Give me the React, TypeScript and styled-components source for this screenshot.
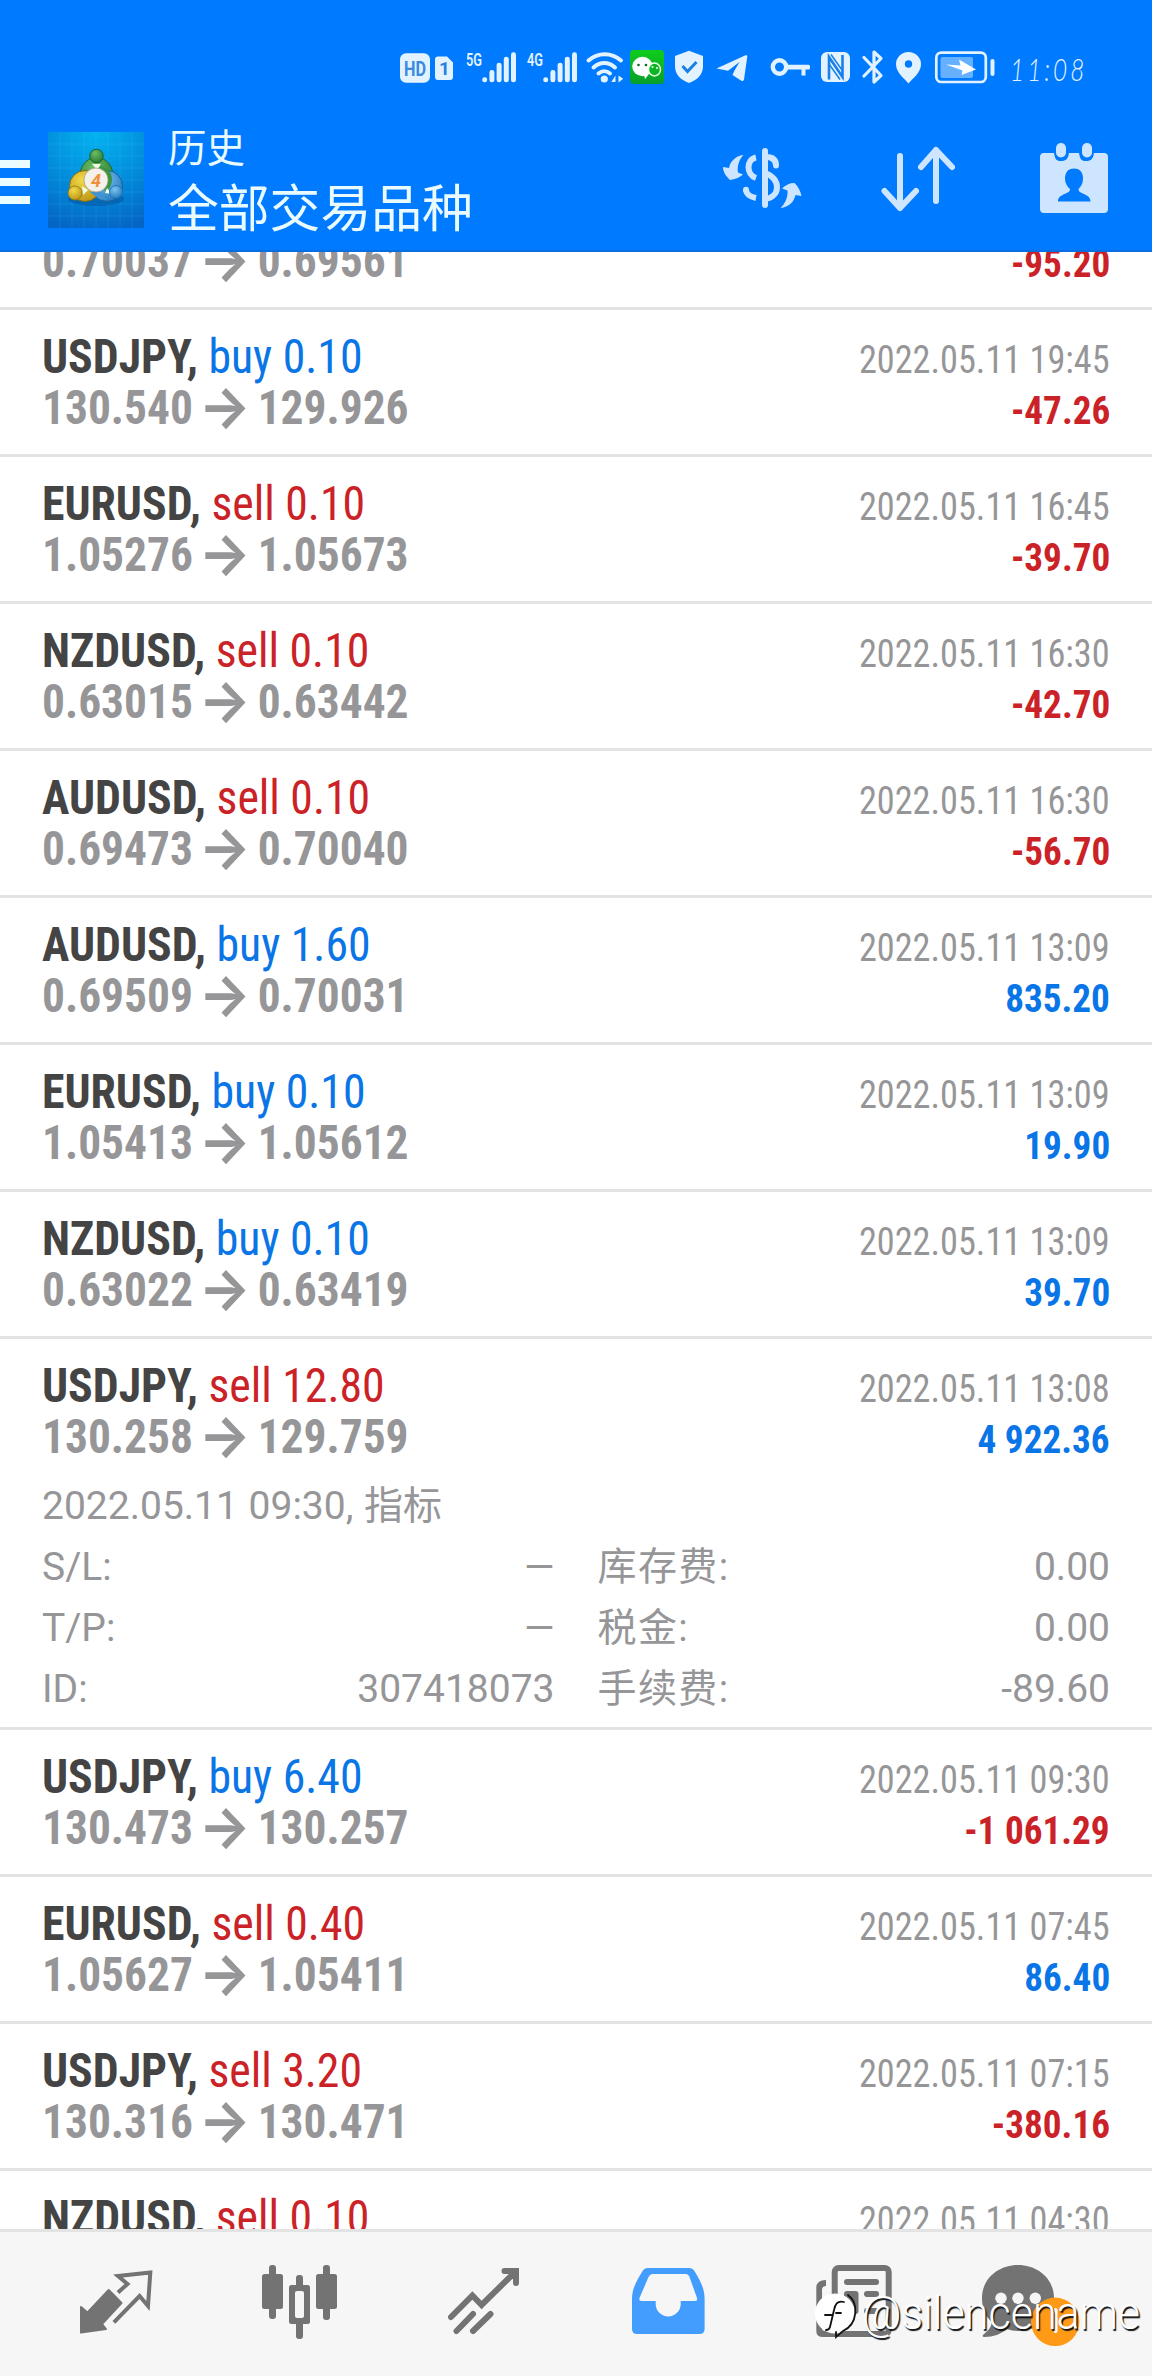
import React from "react";
import styled, { createGlobalStyle } from "styled-components";

const BLUE = "#0a75e6";
const RED = "#cb2227";
const GREY = "#969698";
const ICE = "#e2f3ff";
const NAV = "#737373";

const Global = createGlobalStyle`
  * { box-sizing: border-box; }
  body { margin: 0; background: #fff; }
`;

const Screen = styled.div`
  position: relative;
  display: flex;
  flex-direction: column;
  width: 1152px;
  height: 2376px;
  overflow: hidden;
  background: #fff;
  font-family: Roboto, "Noto Sans CJK SC", sans-serif;
`;

const Header = styled.header`
  flex: none;
  height: 252px;
  background: #007aff;
  border-bottom: 2px solid #0a6ee0;
  padding-top: 48px;
`;

const StatusBar = styled.div`
  display: flex;
  height: 40px;
  padding-left: 400px;
`;

const StatusIcon = styled.svg<{ $gap?: number }>`
  flex: none;
  display: block;
  height: 40px;
  margin-left: ${(p) => p.$gap ?? 0}px;
  overflow: visible;
  fill: ${ICE};
`;

const Clock = styled.span`
  margin-left: 15px;
  font: italic 300 32px/42px Lato, Roboto, sans-serif;
  letter-spacing: 4px;
  color: ${ICE};
  white-space: nowrap;
  transform: scaleX(0.76);
  transform-origin: left center;
`;

const TitleBar = styled.div`
  display: flex;
  align-items: flex-start;
  height: 162px;
  padding-top: 32px;
`;

const Burger = styled.div`
  display: flex;
  flex-direction: column;
  gap: 10px;
  width: 30px;
  margin-top: 40px;
  span { height: 8px; background: #ebfcff; }
`;

const Logo = styled.svg`
  display: block;
  flex: none;
  margin: 12px 0 0 18px;
`;

const Titles = styled.div`
  flex: 1;
  margin: 4px 0 0 24px;
  color: #e9fbff;
  white-space: nowrap;
`;
const Caption = styled.div`
  font-size: 38.5px;
  line-height: 50px;
`;
const Title = styled.div`
  font-size: 50.8px;
  line-height: 71px;
`;

const Actions = styled.div`
  display: flex;
  gap: 60px;
  padding-right: 44px;
  margin-top: 22px;
  svg { display: block; }
`;

const List = styled.main`
  flex: 1;
  min-height: 0;
  overflow: hidden;
`;
const Row = styled.section<{ $part?: "tail" | "head" }>`
  padding: 21px 42px;
  border-bottom: 3px solid #e3e3e3;
  ${(p) => p.$part === "tail" && "padding-top: 0; margin-top: -17px;"}
  ${(p) => p.$part === "head" && "padding-bottom: 0; border-bottom: 0;"}
`;
const Line = styled.div`
  display: flex;
  justify-content: space-between;
  align-items: baseline;
  height: 51px;
  line-height: 51px;
  white-space: nowrap;
`;
const Condensed = styled.span<{ $from?: "left" | "right" }>`
  display: inline-block;
  font-family: "Roboto Condensed", Roboto, sans-serif;
  font-stretch: 75%;
  transform: scaleX(0.953);
  transform-origin: ${(p) => p.$from ?? "left"} center;
`;
const Deal = styled(Condensed)<{ $tone: string }>`
  font-size: 48px;
  color: ${(p) => p.$tone};
  b { color: #444; }
`;
const Prices = styled(Condensed)`
  font-size: 48px;
  font-weight: 700;
  color: ${GREY};
  transform: scaleX(0.946);
`;
const Arrow = styled.span`
  display: inline-block;
  height: 0;
  margin: 0 -4px 0 -5px;
  font: 700 58px/0 Inter, sans-serif;
  vertical-align: -3px;
`;
const Time = styled(Condensed)`
  font-size: 39px;
  color: ${GREY};
  transform: scaleX(0.93);
`;
const Profit = styled(Condensed)<{ $tone: string }>`
  font-size: 39px;
  font-weight: 700;
  color: ${(p) => p.$tone};
`;

const Details = styled.div`
  padding-top: 14px;
  margin-bottom: -14px;
  font-size: 39px;
  line-height: 61px;
  color: ${GREY};
`;
const Opened = styled.div`
  height: 61px;
  word-spacing: 1px;
  white-space: nowrap;
`;
const Fields = styled.dl`
  display: grid;
  grid-template-columns: 1fr 1fr;
  grid-auto-rows: 61px;
  column-gap: 43px;
  margin: 0;
`;
const Field = styled.div<{ $wide: boolean }>`
  display: flex;
  justify-content: space-between;
  dt, dd { margin: 0; white-space: nowrap; }
  dt { letter-spacing: ${(p) => (p.$wide ? 1.4 : 0)}px; }
`;

const Nav = styled.nav`
  flex: none;
  display: flex;
  align-items: center;
  height: 147px;
  padding: 0 24px;
  background: #f6f6f6;
  border-top: 3px solid #e3e3e3;
`;
const Tab = styled.div`
  flex: 1;
  display: flex;
  justify-content: center;
  svg { display: block; overflow: visible; }
`;

const Watermark = styled.div`
  position: absolute;
  left: 815px;
  top: 2284px;
  display: flex;
  align-items: center;
  height: 58px;
  color: #fff;
  font: 300 46px/58px Roboto, sans-serif;
  text-shadow: 1.5px 1.5px 1px #111;
  white-space: nowrap;
  span { transform: scaleX(0.936); transform-origin: left center; }
`;

type Trade = {
  sym?: string;
  side?: "buy" | "sell";
  lot?: string;
  time?: string;
  from?: string;
  to?: string;
  profit?: string;
  details?: boolean;
};

const t = (
  sym: string, side: "buy" | "sell", lot: string, from: string, to: string,
  time: string, profit: string, details = false
): Trade => ({ sym, side, lot, from, to, time: "2022.05.11 " + time, profit, details });

const trades: Trade[] = [
  { from: "0.70037", to: "0.69561", profit: "-95.20" },
  t("USDJPY", "buy", "0.10", "130.540", "129.926", "19:45", "-47.26"),
  t("EURUSD", "sell", "0.10", "1.05276", "1.05673", "16:45", "-39.70"),
  t("NZDUSD", "sell", "0.10", "0.63015", "0.63442", "16:30", "-42.70"),
  t("AUDUSD", "sell", "0.10", "0.69473", "0.70040", "16:30", "-56.70"),
  t("AUDUSD", "buy", "1.60", "0.69509", "0.70031", "13:09", "835.20"),
  t("EURUSD", "buy", "0.10", "1.05413", "1.05612", "13:09", "19.90"),
  t("NZDUSD", "buy", "0.10", "0.63022", "0.63419", "13:09", "39.70"),
  t("USDJPY", "sell", "12.80", "130.258", "129.759", "13:08", "4 922.36", true),
  t("USDJPY", "buy", "6.40", "130.473", "130.257", "09:30", "-1 061.29"),
  t("EURUSD", "sell", "0.40", "1.05627", "1.05411", "07:45", "86.40"),
  t("USDJPY", "sell", "3.20", "130.316", "130.471", "07:15", "-380.16"),
  { sym: "NZDUSD", side: "sell", lot: "0.10", time: "2022.05.11 04:30" },
];

const fields = [
  ["S/L:", "—"], ["库存费:", "0.00"],
  ["T/P:", "—"], ["税金:", "0.00"],
  ["ID:", "307418073"], ["手续费:", "-89.60"],
];

function TradeRow({ d }: { d: Trade }) {
  return (
    <Row $part={!d.sym ? "tail" : !d.from ? "head" : undefined}>
      {d.sym && (
        <Line>
          <Deal $tone={d.side === "buy" ? BLUE : RED}><b>{d.sym},</b> {d.side} {d.lot}</Deal>
          <Time $from="right">{d.time}</Time>
        </Line>
      )}
      {d.from && (
        <Line>
          <Prices>{d.from} <Arrow>→</Arrow> {d.to}</Prices>
          <Profit $from="right" $tone={d.profit?.startsWith("-") ? RED : BLUE}>{d.profit}</Profit>
        </Line>
      )}
      {d.details && (
        <Details>
          <Opened>2022.05.11 09:30, 指标</Opened>
          <Fields>
            {fields.map(([k, v], i) => (
              <Field key={k} $wide={i % 2 === 1}><dt>{k}</dt><dd>{v}</dd></Field>
            ))}
          </Fields>
        </Details>
      )}
    </Row>
  );
}

function Signal({ label, gap }: { label: string; gap: number }) {
  const tops = [29.3, 22, 14.7, 8.7, 4.3];
  return (
    <StatusIcon $gap={gap} width="50">
      <text x="0" y="17.5" fontSize="18.5" fontWeight="600" fontFamily="Roboto" textLength="16" lengthAdjust="spacingAndGlyphs">{label}</text>
      {tops.map((y, i) => (
        <rect key={y} x={16.2 + i * 7.2} y={y} width="5" height={34.3 - y} rx="2.4" />
      ))}
    </StatusIcon>
  );
}

function StatusIcons() {
  return (
    <StatusBar>
      <StatusIcon width="30">
        <rect y="5.3" width="30" height="29.4" rx="6" />
        <text x="4" y="27.5" fontSize="20" fontWeight="700" fontFamily="Roboto" fill="#3a8ae0" textLength="22" lengthAdjust="spacingAndGlyphs">HD</text>
      </StatusIcon>
      <StatusIcon $gap={5} width="18">
        <path d="M3 8.500h9l6 6V29a3 3 0 0 1-3 3H3a3 3 0 0 1-3-3V11.500a3 3 0 0 1 3-3z" />
        <text x="4" y="27" fontSize="19" fontWeight="700" fontFamily="Roboto" fill="#2a80e0">1</text>
      </StatusIcon>
      <Signal label="5G" gap={13} />
      <Signal label="4G" gap={11} />
      <StatusIcon $gap={9} width="38">
        <g fill="none" stroke={ICE} strokeWidth="4" strokeLinecap="round">
          <path d="M2.500 12.500C12 4 25.500 4 35 12.500" />
          <path d="M7.500 19.500c6.500-6 15-6 21.500 0" />
          <path d="M12.500 25.500c3.500-3 8-3 11.500 0" />
        </g>
        <circle cx="18.300" cy="31" r="3.600" />
        <path d="M29.500 27.500v6.500h-4.200zM32.500 34.500v-7l4.700 3.200z" />
      </StatusIcon>
      <StatusIcon $gap={6} width="34">
        <defs>
          <linearGradient id="wx" x1="0" y1="0" x2="0" y2="1">
            <stop offset="0" stopColor="#10cd1c" /><stop offset="1" stopColor="#079e2b" />
          </linearGradient>
        </defs>
        <rect y="2" width="34" height="34" rx="4" fill="url(#wx)" />
        <ellipse cx="12.500" cy="18.500" rx="10.300" ry="9.700" fill="#fff" />
        <path d="M14 27l1 4 4-5z" fill="#fff" />
        <ellipse cx="24.500" cy="21.500" rx="6" ry="6.500" fill="#0bb624" stroke="#e8ffe8" strokeWidth="1.500" />
        <circle cx="8.500" cy="17" r="1.300" fill="#0b6a20" /><circle cx="16" cy="17" r="1.300" fill="#0b6a20" />
        <circle cx="22.500" cy="19" r="1" fill="#fff" /><circle cx="27" cy="20" r="1" fill="#fff" />
      </StatusIcon>
      <StatusIcon $gap={11} width="28">
        <path d="M14 2.700L28 8v10c0 9-6 14-14 17C6 32 0 27 0 18V8z" />
        <path d="M7.500 18l5 5.500L21.500 14" fill="none" stroke="#1a7fe8" strokeWidth="3" />
      </StatusIcon>
      <StatusIcon $gap={12.500} width="32">
        <path d="M0.500 20.500L29.500 7.300c1-.5 2 .2 1.800 1.300L28 31.500c-.2 1.300-1.500 1.900-2.600 1.200L16.500 27l2-4.500L23.500 14 12 22.800z" />
      </StatusIcon>
      <StatusIcon $gap={23} width="39">
        <circle cx="8.500" cy="19" r="6.700" fill="none" stroke={ICE} strokeWidth="4.400" />
        <path d="M16 16.800h21.500q1.500 0 1.500 1.500v1.700q0 1.500-1.500 1.500H34.500v6h-4v-6H16z" />
      </StatusIcon>
      <StatusIcon $gap={11} width="29">
        <rect y="4" width="29" height="30" rx="6" />
        <path d="M8 31.500V9l13.500 20V7" fill="none" stroke="#1a7fe8" strokeWidth="2.600" />
        <path d="M10 6.500l11 15.500M8 16l11 15.500" fill="none" stroke="#1a7fe8" strokeWidth="1.500" />
      </StatusIcon>
      <StatusIcon $gap={12} width="22">
        <path d="M2 9.500L19 27.500 12 34V4l7 6.500L2 28" fill="none" stroke={ICE} strokeWidth="3.200" strokeLinejoin="round" strokeLinecap="round" />
      </StatusIcon>
      <StatusIcon $gap={12.500} width="25">
        <path fillRule="evenodd" d="M12.500 4A12.300 12.300 0 0 1 25 16.300C25 25 16 31 12.500 35.500 9 31 0 25 0 16.300A12.300 12.300 0 0 1 12.500 4zm0 8.300a3.700 3.700 0 1 0 0 7.400 3.700 3.700 0 0 0 0-7.400z" />
      </StatusIcon>
      <StatusIcon $gap={14} width="60">
        <rect x="1.300" y="4.600" width="49.500" height="29.400" rx="5" fill="none" stroke={ICE} strokeWidth="2.700" />
        <rect x="5.500" y="9" width="32.500" height="21" rx="2" opacity=".45" />
        <path d="M11 16.500l14.500 1-1.500-6 17 10-14.500 5.500 1-4.500z" fill="#fff" />
        <rect x="55.500" y="11" width="4" height="17" rx="2" />
      </StatusIcon>
      <Clock>11:08</Clock>
    </StatusBar>
  );
}

function AppLogo() {
  const grid = [12, 24, 36, 48, 60, 72, 84];
  return (
    <Logo width="96" height="96" viewBox="0 0 96 96">
      <defs>
        <radialGradient id="bg" cx=".5" cy="0" r="1.050">
          <stop offset="0" stopColor="#02b4f0" /><stop offset=".5" stopColor="#0290dd" /><stop offset="1" stopColor="#0465c4" />
        </radialGradient>
        <radialGradient id="gr" cx=".4" cy=".3" r=".8"><stop offset="0" stopColor="#6cbc64" /><stop offset="1" stopColor="#23762f" /></radialGradient>
        <radialGradient id="ye" cx=".4" cy=".3" r=".8"><stop offset="0" stopColor="#f2da4a" /><stop offset="1" stopColor="#b88f10" /></radialGradient>
        <radialGradient id="bl" cx=".4" cy=".3" r=".8"><stop offset="0" stopColor="#7cc4f0" /><stop offset="1" stopColor="#1b74bd" /></radialGradient>
      </defs>
      <rect width="96" height="96" fill="url(#bg)" />
      {grid.map((g) => (
        <path key={g} d={`M${g} 0V96M0 ${g}H96`} stroke="#5fc4ff" strokeWidth=".7" opacity=".22" />
      ))}
      <ellipse cx="48" cy="67" rx="28" ry="7" fill="#034a94" opacity=".45" />
      <path d="M32 46a16 18 0 0 1 33-4c1 7-2 14-6 17H38z" fill="url(#gr)" stroke="#216a2a" strokeWidth="1" />
      <circle cx="59" cy="54" r="15.500" fill="url(#bl)" stroke="#1c5f94" strokeWidth="1" />
      <circle cx="37" cy="54" r="15.500" fill="url(#ye)" stroke="#7d6d10" strokeWidth="1" />
      <path d="M52 34c9 2 12 8 12 13 0 6-3 10-6 13l-8-12z" fill="#3b9440" />
      <path d="M42 60l8-3 9 11-8-1z" fill="#3f94cf" />
      <path d="M44 32h9l-4 6zM34 54l6 4-5 5zM59 56l5 6-7-1z" fill="#effbe8" />
      <circle cx="48.500" cy="24" r="6.700" fill="url(#gr)" stroke="#1c6425" strokeWidth="1" />
      <circle cx="27" cy="61" r="7" fill="url(#ye)" stroke="#8d7510" strokeWidth=".8" />
      <circle cx="68" cy="60" r="6.500" fill="url(#bl)" stroke="#1c6aa4" strokeWidth=".8" />
      <circle cx="48" cy="48" r="12" fill="#f4f0ea" stroke="#aaa18c" strokeWidth=".8" />
      <text x="48" y="54.500" textAnchor="middle" fontFamily="Roboto" fontStyle="italic" fontWeight="700" fontSize="18" fill="#f0903c">4</text>
    </Logo>
  );
}

function HeaderActions() {
  const c = "#cde5ff";
  return (
    <Actions>
      <svg width="100" height="72" viewBox="0 0 100 72">
        <g fill="none" stroke={c} strokeWidth="6">
          <path d="M46 15.500c-10 2-10 17 0 20.500" />
          <path d="M36 48c.5 4 4.500 7 10 8" />
          <path d="M36 47.800v.4" strokeLinecap="round" />
          <path d="M56 15c7 0 10 3 10 8.500" strokeLinecap="round" />
          <path d="M55 31c16 5 16 24 0 26" />
        </g>
        <rect x="52" y="6" width="6" height="60" rx="3" fill={c} />
        <path d="M33.500 13C25 14 20 20 19 26l-6-1c0 5 3 9 7 13 5-1 9-2 13-5.500l-5-2c-1-6 1-13 5.500-17.500z" fill={c} />
        <path d="M70.500 66C79 65 84 60 85.500 53l6 1c-1-5-3-9-7-13-5 0-9 2-12.500 5.500l5.500 2c.5 6-2 13-7 17.500z" fill={c} />
      </svg>
      <svg width="94" height="72" viewBox="0 0 94 72" fill="none" stroke={c} strokeWidth="6" strokeLinecap="round" strokeLinejoin="round">
        <path d="M31 15v52M15.500 50L31 67l16-17M67 60V9M52 26L67 9l16 17" transform="translate(-1 -1)" />
      </svg>
      <svg width="84" height="72" viewBox="0 0 84 72">
        <path fill={c} d="M20 11h10c1 7 3 8 7 8s7-1 8-8h10c1 7 3 8 7 8s7-1 8-8h10q4 0 4 4v52q0 4-4 4H20q-4 0-4-4V15q0-4 4-4z" />
        <rect x="32" y="1" width="10" height="14.500" rx="5" fill={c} /><rect x="58" y="1" width="10" height="14.500" rx="5" fill={c} />
        <path d="M50 26.500c6 0 9 4 9 10 0 5-2 8-4.500 10.500 0 6 12 4 12 12.500H34c0-8.500 12-6.500 12-12.500C43 44.500 41 41 41 36.500c0-6 3-10 9-10z" fill="#007aff" />
      </svg>
    </Actions>
  );
}

const tabIcons = [
  <g key="quotes">
    <path fill={NAV} stroke={NAV} strokeWidth="2" strokeLinejoin="round" d="M21 59l6.500 5.500L48.700 42 61.500 55 42 76l4 5-25 3.500z" />
    <path fill="none" stroke={NAV} strokeWidth="4" d="M58 44.500l9.500-8.500-9.500-8 32.300-3.500L88 58l-8.400-10L53.900 74.300" />
  </g>,
  <g key="charts" fill={NAV}>
    <rect x="18" y="26" width="21" height="35" rx="2.500" /><rect x="25" y="17" width="7" height="54" rx="3" />
    <rect x="72" y="26" width="21" height="35" rx="2.500" /><rect x="79" y="17" width="7" height="55" rx="3" />
    <rect x="45" y="37" width="21" height="39" rx="2.500" /><rect x="52" y="27" width="7" height="64" rx="3" />
    <rect x="51" y="43" width="9" height="27" rx="2" fill="#f6f6f6" />
  </g>,
  <g key="trade" fill="none" stroke={NAV} strokeWidth="6" strokeLinecap="round">
    <path d="M23 69L44.400 47.500l9.200 9.500L87 24M76.500 23H88v12M28.500 83L45 66M45 83l17.500-17" />
  </g>,
  <path key="history" fill="#429dff" fillRule="evenodd"
    d="M36 20h41q4 0 6 4c6 10 9.600 17 9.600 27v30q0 5-5 5H25q-5 0-5-5V51c0-10 4-17 10-27q2-4 6-4zM41 26q-3 0-4.500 3L27.500 50q-1 3 2 3h14.200v3a12.500 12.500 0 0 0 25 0v-3H83q3 0 2-3L77.500 29q-1-3-4-3z" />,
  <g key="news" fill={NAV}>
    <rect x="38.700" y="20" width="54" height="66" rx="4" fill="none" stroke={NAV} strokeWidth="6" />
    <path d="M30 32v6q-4 0-4 4v38q0 3 3 3h10v6H27q-6.700 0-6.700-6V40q0-8 9.700-8z" />
    <rect x="48" y="31" width="35" height="6" rx="3" /><rect x="48" y="43" width="14.500" height="23" rx="3" />
    <rect x="68" y="43" width="15" height="6" rx="3" /><rect x="68" y="60" width="15" height="6" rx="3" />
  </g>,
  <g key="chat">
    <path fill={NAV} d="M38 17c20 0 36 14 36 33S58 83 38 83c-4 0-8-1-11-2-6 5-14 8-22 8-3 0-3-1.500-1-3 5-4 7-7 8-12C5 68 2 60 2 50c0-19 16-33 36-33z" />
    <g fill="#f6f6f6"><circle cx="21" cy="50.300" r="5.700" /><circle cx="38" cy="50.300" r="5.700" /><circle cx="55.300" cy="50.300" r="5.700" /></g>
    <circle cx="75.200" cy="73.800" r="24.200" fill="#ff9a16" />
    <rect x="73.500" y="60" width="4" height="25" rx="2" fill="#fff" />
  </g>,
];

export default function App() {
  return (
    <Screen>
      <Global />
      <Header>
        <StatusIcons />
        <TitleBar>
          <Burger><span /><span /><span /></Burger>
          <AppLogo />
          <Titles>
            <Caption>历史</Caption>
            <Title>全部交易品种</Title>
          </Titles>
          <HeaderActions />
        </TitleBar>
      </Header>
      <List>
        {trades.map((d, i) => <TradeRow key={i} d={d} />)}
      </List>
      <Nav>
        {tabIcons.map((icon) => (
          <Tab key={icon.key}><svg width="112" height="112" viewBox="0 0 112 112">{icon}</svg></Tab>
        ))}
      </Nav>
      <Watermark>
        <svg width="47" height="58" viewBox="0 0 47 58">
          <path fill="#fff" d="M20 9.500a20 20 0 1 1 0 40 20 20 0 1 1 0-40z" />
          <path fill="none" stroke="#111" strokeWidth="1.800" strokeLinecap="round" d="M33 11c11 8 10 29-5 36l-7 6v-5M29 18c-7-2-9 3-10 8l-4 17c-.5 2-2 3-4 3M10 31h8M21 29h5" />
        </svg>
        <span>@silencename</span>
      </Watermark>
    </Screen>
  );
}
